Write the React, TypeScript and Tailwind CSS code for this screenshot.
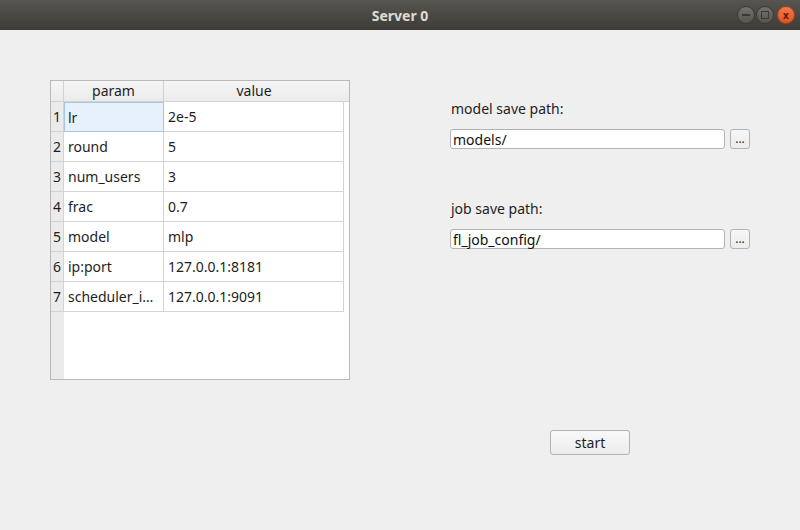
import React from 'react';

const ROWS: [string, string][] = [
  ['lr', '2e-5'],
  ['round', '5'],
  ['num_users', '3'],
  ['frac', '0.7'],
  ['model', 'mlp'],
  ['ip:port', '127.0.0.1:8181'],
  ['scheduler_i…', '127.0.0.1:9091'],
];

function TitleBar() {
  return (
    <div className="relative flex h-[30px] items-center justify-center bg-gradient-to-b from-[#57554f] to-[#3d3c38]">
      <span className="text-[14px] font-bold text-[#dfdbd2]">Server 0</span>
      <div className="absolute right-[5px] top-[6px] flex gap-[1px]">
        <span className="flex h-[18px] w-[18px] items-center justify-center rounded-full bg-gradient-to-b from-[#74726d] to-[#56544f] border border-[#3a3935]">
          <span className="h-[1.5px] w-[8px] bg-[#3a3935]" />
        </span>
        <span className="flex h-[18px] w-[18px] items-center justify-center rounded-full bg-gradient-to-b from-[#74726d] to-[#56544f] border border-[#3a3935]">
          <span className="h-[8px] w-[8px] border-[1.5px] border-[#3a3935]" />
        </span>
        <span className="ml-[2px] flex h-[18px] w-[18px] items-center justify-center rounded-full bg-gradient-to-b from-[#f07a4c] to-[#e0521f] border border-[#a8401a] text-[10px] font-bold leading-none text-[#5a1d08]">
          x
        </span>
      </div>
    </div>
  );
}

function ParamTable() {
  return (
    <div className="flex h-[300px] w-[300px] flex-col border border-[#b9b9b9] bg-white">
      <div className="flex h-[21px] border-b border-[#d3d3d3] bg-gradient-to-b from-[#f5f5f5] to-[#ebebeb] text-[14px] leading-[20px] text-[#1e1e1e]">
        <div className="w-[13px] border-r border-[#d3d3d3]" />
        <div className="w-[100px] border-r border-[#d3d3d3] text-center">param</div>
        <div className="w-[180px] text-center">value</div>
      </div>
      <div className="flex flex-1">
        <div className="w-[13px] bg-[#ebebeb]" />
        <div className="flex flex-col">
          {ROWS.map(([k, v], i) => (
            <div key={k} className="flex h-[30px] text-[14px] text-[#1e1e1e]">
              <div className="-ml-[13px] flex w-[13px] items-center justify-center border-r border-b border-[#d3d3d3] bg-[#ebebeb]">
                {i + 1}
              </div>
              <div
                className={
                  i === 0
                    ? 'flex w-[100px] items-center border border-[#a9c6e2] bg-[#e6f1fb] pl-[3px]'
                    : 'flex w-[100px] items-center border-r border-b border-[#d3d3d3] pl-[4px]'
                }
              >
                {k}
              </div>
              <div className="flex w-[180px] items-center border-r border-b border-[#d3d3d3] pl-[4px]">{v}</div>
            </div>
          ))}
        </div>
      </div>
    </div>
  );
}

function PathField({ label, value }: { label: string; value: string }) {
  return (
    <div className="flex flex-col">
      <div className="h-[20px] pl-[1px] text-[14px] leading-[20px] text-[#1e1e1e]">{label}</div>
      <div className="mt-[10px] flex gap-[5px]">
        <div className="flex h-[20px] w-[275px] items-center rounded-[3px] border border-[#b3b3b3] bg-white pl-[2px] text-[14px] text-[#111]">
          {value}
        </div>
        <div className="flex h-[20px] w-[20px] items-end justify-center rounded-[3px] border border-[#b3b3b3] bg-gradient-to-b from-[#f7f7f7] to-[#ececec] pb-[3px] text-[12px] leading-none text-[#222]">
          ...
        </div>
      </div>
    </div>
  );
}

export default function App() {
  return (
    <div className="flex h-[530px] w-[800px] flex-col bg-[#efefef] font-['Noto_Sans',sans-serif]">
      <TitleBar />
      <div className="flex pl-[50px] pt-[50px]">
        <ParamTable />
        <div className="ml-[100px] flex flex-col pt-[19px]">
          <PathField label="model save path:" value="models/" />
          <div className="mt-[50px]">
            <PathField label="job save path:" value="fl_job_config/" />
          </div>
          <button className="ml-[100px] mt-[181px] h-[25px] w-[80px] rounded-[3px] border border-[#b3b3b3] bg-gradient-to-b from-[#f8f8f8] to-[#ededed] text-[14px] text-[#1e1e1e]">
            start
          </button>
        </div>
      </div>
    </div>
  );
}
